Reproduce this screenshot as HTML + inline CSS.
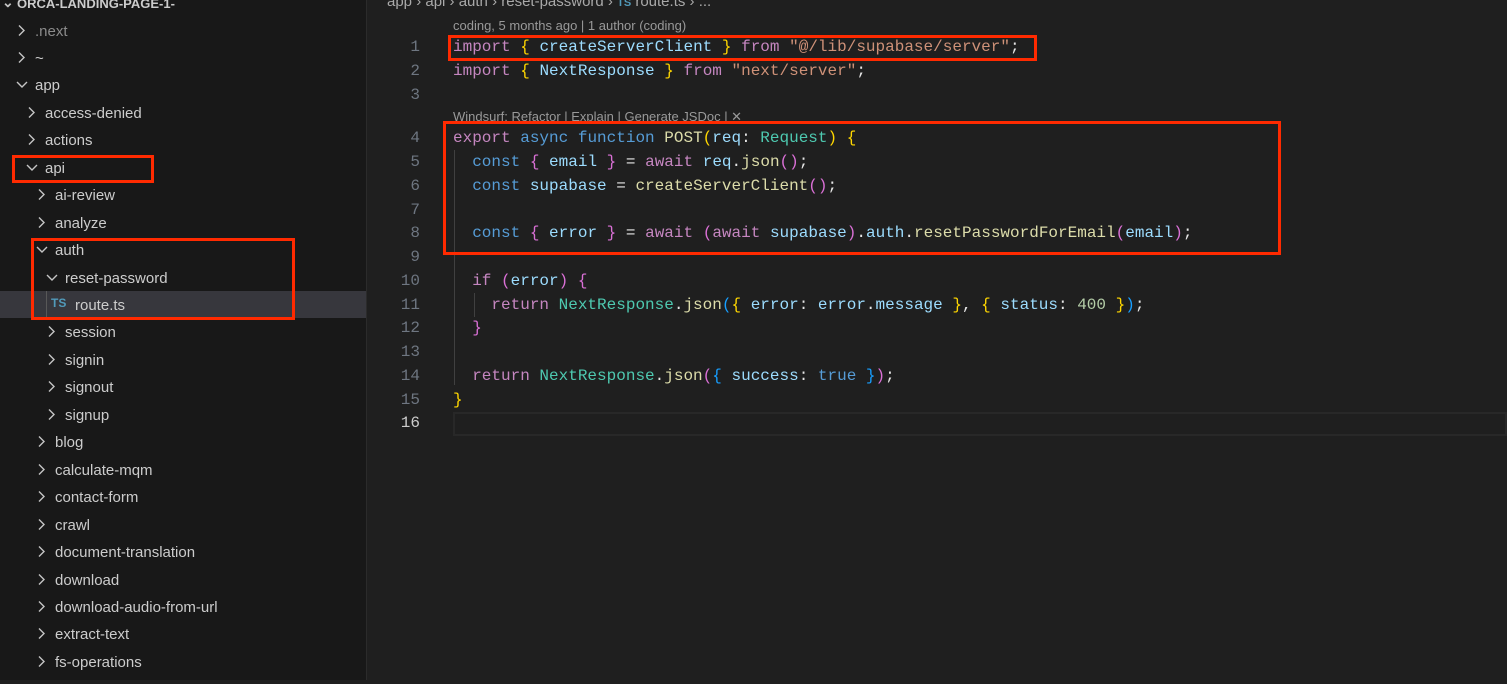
<!DOCTYPE html>
<html><head><meta charset="utf-8"><style>
*{margin:0;padding:0;box-sizing:border-box}
body{width:1507px;height:680px;overflow:hidden;background:#1f1f1f;position:relative;font-family:"Liberation Sans",sans-serif}
#side{position:absolute;left:0;top:0;width:367px;height:680px;background:#181818;border-right:1px solid #2b2b2b}
.r{position:absolute;left:0;width:366px;height:27px;color:#cccccc;font-size:15px;line-height:27px;white-space:nowrap}
.ch{position:absolute;top:0;color:#c5c5c5;font-size:14px}
.t{position:absolute;top:1px}
.ln{position:absolute;left:380px;width:40px;text-align:right;color:#6e7681;font-family:"Liberation Mono",monospace;font-size:16px;line-height:24px}
.cl{position:absolute;left:453px;color:#e6e6e6;font-family:"Liberation Mono",monospace;font-size:16px;line-height:24px;white-space:pre}
.box{position:absolute;border:3px solid #ff2a00}
.k{color:#c586c0}.b{color:#569cd6}.v{color:#9cdcfe}.f{color:#dcdcaa}.s{color:#ce9178}.ty{color:#4ec9b0}.n{color:#b5cea8}.y{color:#ffd700}.p{color:#da70d6}.bl{color:#179fff}.w{color:#d4d4d4}
.lens{position:absolute;left:453px;color:#999;font-size:13px}
</style></head><body>
<div id="side">
<div class="r" style="top:-11px;font-weight:bold;font-size:13px"><span class="ch" style="left:2px">⌄</span><span class="t" style="left:17px">ORCA-LANDING-PAGE-1-</span></div>
</div>
<div id="rows"></div>
<script>
var items=[[".next",0,0],["~",0,0],["app",0,1],["access-denied",1,0],["actions",1,0],["api",1,1],["ai-review",2,0],["analyze",2,0],["auth",2,1],["reset-password",3,1],["route.ts",4,2],["session",3,0],["signin",3,0],["signout",3,0],["signup",3,0],["blog",2,0],["calculate-mqm",2,0],["contact-form",2,0],["crawl",2,0],["document-translation",2,0],["download",2,0],["download-audio-from-url",2,0],["extract-text",2,0],["fs-operations",2,0]];
var h="";
items.forEach(function(it,i){
 var c=30+i*27.45, top=c-13.5;
 var lvl=it[1], cx=[14,24,34,44][Math.min(lvl,3)], tx=[35,45,55,65,75][lvl];
 var sel=it[2]==2, bg=sel?"background:#37373d;":"";
 var col=it[0]==".next"?"#8b8b8b":"#cccccc";
 h+='<div class="r" style="top:'+top+'px;'+bg+'">';
 if(sel){h+='<span class="t" style="left:51px;color:#519aba;font-weight:bold;font-size:12px;top:-1px">TS</span><span style="position:absolute;left:46px;top:0;width:1px;height:27px;background:#585858"></span>';}
 else h+='<span class="ch" style="left:'+cx+'px">'+(it[2]?'<svg width="16" height="27" viewBox="0 0 16 27"><path d="M3 11 L8 16 L13 11" stroke="#c5c5c5" stroke-width="1.4" fill="none"/></svg>':'<svg width="16" height="27" viewBox="0 0 16 27"><path d="M5 8.5 L10 13.5 L5 18.5" stroke="#c5c5c5" stroke-width="1.4" fill="none"/></svg>')+'</span>';
 h+='<span class="t" style="left:'+tx+'px;color:'+col+'">'+it[0]+'</span></div>';
});
document.getElementById('rows').innerHTML=h;
</script>
<div style="position:absolute;left:387px;top:-7px;color:#a9a9a9;font-size:15px;white-space:nowrap">app › api › auth › reset-password › <span style="color:#519aba;font-size:11px;font-weight:bold">TS</span> route.ts › ...</div>
<div class="lens" style="top:18px">coding, 5 months ago | 1 author (coding)</div>
<div class="lens" style="top:109px">Windsurf: Refactor | Explain | Generate JSDoc | ✕</div>
<div style="position:absolute;left:453px;top:412px;width:1054px;height:24px;border:2px solid #282828"></div>
<div style="position:absolute;left:454px;top:150px;width:1px;height:235px;background:#404040"></div>
<div style="position:absolute;left:474px;top:293px;width:1px;height:24px;background:#404040"></div>
<div id="code"></div>
<script>
var L=[[1,35,'<span class="k">import</span> <span class="y">{</span> <span class="v">createServerClient</span> <span class="y">}</span> <span class="k">from</span> <span class="s">"@/lib/supabase/server"</span>;'],
[2,59,'<span class="k">import</span> <span class="y">{</span> <span class="v">NextResponse</span> <span class="y">}</span> <span class="k">from</span> <span class="s">"next/server"</span>;'],
[3,83,''],
[4,126,'<span class="k">export</span> <span class="b">async</span> <span class="b">function</span> <span class="f">POST</span><span class="y">(</span><span class="v">req</span>: <span class="ty">Request</span><span class="y">)</span> <span class="y">{</span>'],
[5,150,'  <span class="b">const</span> <span class="p">{</span> <span class="v">email</span> <span class="p">}</span> = <span class="k">await</span> <span class="v">req</span>.<span class="f">json</span><span class="p">()</span>;'],
[6,174,'  <span class="b">const</span> <span class="v">supabase</span> = <span class="f">createServerClient</span><span class="p">()</span>;'],
[7,198,''],
[8,221,'  <span class="b">const</span> <span class="p">{</span> <span class="v">error</span> <span class="p">}</span> = <span class="k">await</span> <span class="p">(</span><span class="k">await</span> <span class="v">supabase</span><span class="p">)</span>.<span class="v">auth</span>.<span class="f">resetPasswordForEmail</span><span class="p">(</span><span class="v">email</span><span class="p">)</span>;'],
[9,245,''],
[10,269,'  <span class="k">if</span> <span class="p">(</span><span class="v">error</span><span class="p">)</span> <span class="p">{</span>'],
[11,293,'    <span class="k">return</span> <span class="ty">NextResponse</span>.<span class="f">json</span><span class="bl">(</span><span class="y">{</span> <span class="v">error</span>: <span class="v">error</span>.<span class="v">message</span> <span class="y">}</span>, <span class="y">{</span> <span class="v">status</span>: <span class="n">400</span> <span class="y">}</span><span class="bl">)</span>;'],
[12,316,'  <span class="p">}</span>'],
[13,340,''],
[14,364,'  <span class="k">return</span> <span class="ty">NextResponse</span>.<span class="f">json</span><span class="p">(</span><span class="bl">{</span> <span class="v">success</span>: <span class="b">true</span> <span class="bl">}</span><span class="p">)</span>;'],
[15,388,'<span class="y">}</span>'],
[16,411,'']];
var c="";
L.forEach(function(l){c+='<div class="ln" style="top:'+l[1]+'px;'+(l[0]==16?'color:#cccccc':'')+'">'+l[0]+'</div><div class="cl" style="top:'+l[1]+'px">'+l[2]+'</div>';});
document.getElementById('code').innerHTML=c;
</script>
<div class="box" style="left:12px;top:155px;width:142px;height:28px"></div>
<div class="box" style="left:31px;top:238px;width:264px;height:82px"></div>
<div class="box" style="left:448px;top:35px;width:589px;height:26px"></div>
<div class="box" style="left:443px;top:121px;width:838px;height:134px"></div>
</body></html>
